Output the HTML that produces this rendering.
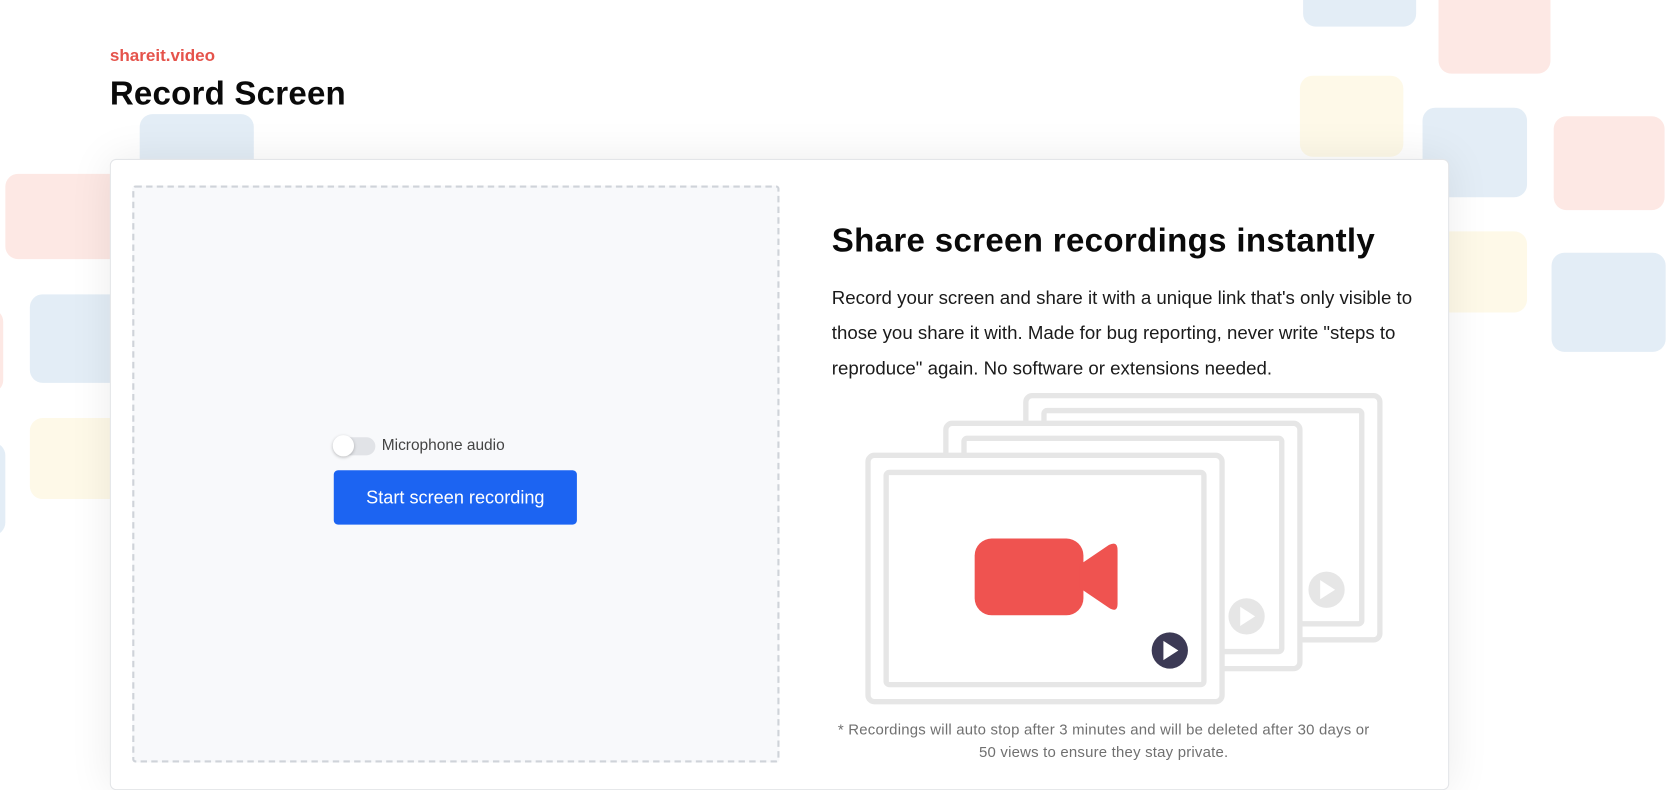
<!DOCTYPE html>
<html><head><meta charset="utf-8"><style>
html,body{margin:0;padding:0;background:#fff;overflow:hidden;width:1671px;height:790px}
#w{position:absolute;left:0;top:0;width:1567px;height:741px;transform:scale(1.06637);transform-origin:0 0;font-family:"Liberation Sans",sans-serif}
.sq{position:absolute;border-radius:12px}
.b{background:#e3edf6}.p{background:#fde8e4}.y{background:#fef9e8}
.card{position:absolute;left:103px;top:149px;width:1254px;height:590px;background:#fff;border:1px solid #e3e5e8;border-radius:6px;box-shadow:0 0 40px rgba(0,0,0,.08)}
</style></head><body><div id="w">
<div class="sq b" style="left:1222px;top:-12px;width:106px;height:37px"></div>
<div class="sq p" style="left:1349px;top:-12px;width:105px;height:81px"></div>
<div class="sq y" style="left:1219px;top:71px;width:97px;height:76px"></div>
<div class="sq b" style="left:1334px;top:101px;width:98px;height:84px"></div>
<div class="sq p" style="left:1457px;top:109px;width:104px;height:88px"></div>
<div class="sq y" style="left:1330px;top:217px;width:102px;height:76px"></div>
<div class="sq b" style="left:1455px;top:237px;width:107px;height:93px"></div>
<div class="sq b" style="left:131px;top:107px;width:107px;height:80px"></div>
<div class="sq p" style="left:5px;top:163px;width:120px;height:80px"></div>
<div class="sq p" style="left:-20px;top:290px;width:23px;height:78px"></div>
<div class="sq b" style="left:28px;top:276px;width:100px;height:83px"></div>
<div class="sq y" style="left:28px;top:392px;width:100px;height:76px"></div>
<div class="sq b" style="left:-20px;top:415px;width:25px;height:87px"></div>
<div style="position:absolute;left:103px;top:44px;color:#e5534b;font-weight:bold;font-size:16px">shareit.video</div>
<div style="position:absolute;left:103px;top:70px;color:#0a0a0a;font-weight:bold;font-size:31px;letter-spacing:0.2px">Record Screen</div>
<div class="card"></div>
<div style="position:absolute;left:124px;top:174px;width:603px;height:537px;background:#f8f9fb;border:2px dashed #cfd3d9;border-radius:3px"></div>
<div style="position:absolute;left:312px;top:410px;width:40px;height:17px;background:#e1e3e7;border-radius:9px"></div>
<div style="position:absolute;left:312px;top:408px;width:20px;height:20px;background:#fff;border-radius:50%;box-shadow:0 1px 3px rgba(0,0,0,.25)"></div>
<div style="position:absolute;left:358px;top:410px;font-size:14.5px;color:#444">Microphone audio</div>
<div style="position:absolute;left:313px;top:441px;width:228px;height:51px;background:#1c64f2;border-radius:4px;color:#fff;font-size:17px;line-height:51px;text-align:center">Start screen recording</div>
<div style="position:absolute;left:780px;top:208px;font-size:31px;font-weight:bold;color:#0a0a0a;letter-spacing:0.3px">Share screen recordings instantly</div>
<div style="position:absolute;left:780px;top:263px;width:560px;font-size:17.5px;line-height:33px;color:#1a1a1a">Record your screen and share it with a unique link that's only visible to those you share it with. Made for bug reporting, never write "steps to reproduce" again. No software or extensions needed.</div>
<svg style="position:absolute;left:0;top:0" width="1567" height="741" viewBox="0 0 1567 741">
<g fill="#fff" stroke="#e6e6e6" stroke-width="5">
<rect x="962" y="371" width="332" height="229" rx="6"/><rect x="979" y="385" width="298" height="200" rx="3"/>
<rect x="887" y="397" width="332" height="230" rx="6"/><rect x="904" y="411" width="298" height="200" rx="3"/>
<rect x="814" y="427" width="332" height="231" rx="6"/><rect x="831" y="443" width="298" height="199" rx="3"/>
</g>
<circle cx="1169" cy="578" r="17" fill="#e6e6e6"/><path d="M1163 569v18l14-9z" fill="#fff"/>
<circle cx="1244" cy="553" r="17" fill="#e6e6e6"/><path d="M1238 544v18l14-9z" fill="#fff"/>
<circle cx="1097" cy="610" r="17" fill="#3c3a55"/><path d="M1091 601v18l14-9z" fill="#fff"/>
<rect x="914" y="505" width="102" height="72" rx="16" fill="#ef5350"/>
<path d="M1012 530 L1040 511 Q1048 507 1048 516 L1048 566 Q1048 575 1040 570 L1012 551Z" fill="#ef5350"/>
</svg>
<div style="position:absolute;left:780px;top:674px;width:510px;text-align:center;font-size:14px;letter-spacing:0.2px;line-height:21px;color:#707070">* Recordings will auto stop after 3 minutes and will be deleted after 30 days or<br>50 views to ensure they stay private.</div>
</div></body></html>
